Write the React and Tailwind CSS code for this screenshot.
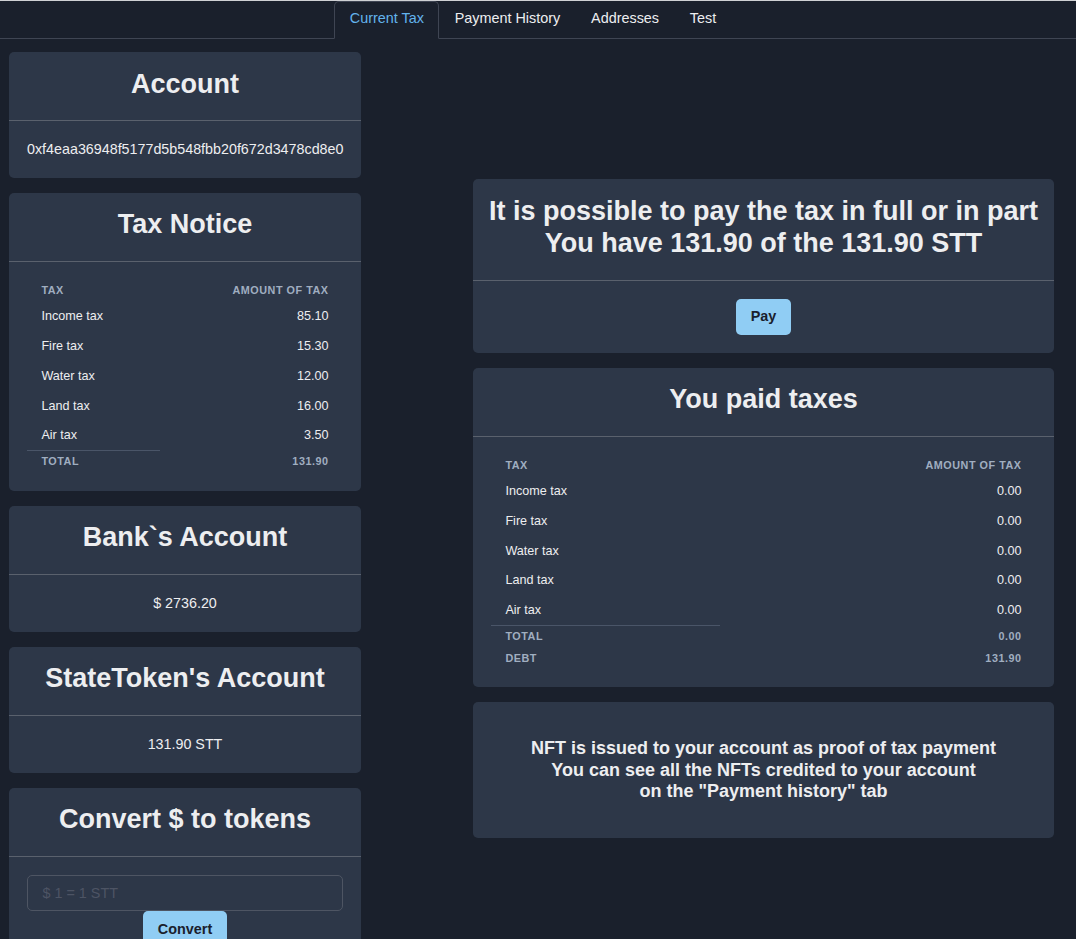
import React from "react";

const taxes = [
  { name: "Income tax", amount: "85.10" },
  { name: "Fire tax", amount: "15.30" },
  { name: "Water tax", amount: "12.00" },
  { name: "Land tax", amount: "16.00" },
  { name: "Air tax", amount: "3.50" },
];

const paid = taxes.map((t) => ({ name: t.name, amount: "0.00" }));

const tabs = ["Current Tax", "Payment History", "Addresses", "Test"];

const Card = ({ title, children, bodyClass = "py-[17.5px] px-[18px]" }) => (
  <div className="bg-[#2d3748] rounded-[5px]">
    <div className="pt-[15.5px] pb-[20.5px] px-[14px] text-center">
      <h2 className="text-[27px] leading-[1.2] font-bold whitespace-nowrap">{title}</h2>
    </div>
    <div className="h-px bg-[#5a616d]" />
    <div className={bodyClass}>{children}</div>
  </div>
);

const Th = ({ children, right, line }) => (
  <th
    className={`px-[14.4px] py-[3.6px] text-[10.8px] leading-[14.4px] tracking-[0.05em] font-bold uppercase text-[#a0aec0] ${
      right ? "text-right" : "text-left"
    } ${line ? "border-t border-[#4a5568]" : ""}`}
  >
    {children}
  </th>
);

// table like on the "tax notice" card, footer rows passed in
const TaxTable = ({ rows, footer }) => (
  <table className="w-full border-collapse">
    <thead>
      <tr className="border-b border-[#2d3748]">
        <Th>Tax</Th>
        <Th right>Amount of tax</Th>
      </tr>
    </thead>
    <tbody>
      {rows.map((r) => (
        <tr key={r.name} className="border-b border-[#2d3748]">
          <td className="px-[14.4px] py-[7.2px] text-[12.6px] leading-[14.4px]">{r.name}</td>
          <td className="px-[14.4px] py-[7.2px] text-[12.6px] leading-[14.4px] text-right">{r.amount}</td>
        </tr>
      ))}
    </tbody>
    <tfoot>
      {footer.map((f, i) => (
        <tr key={f.label}>
          <Th line={i === 0}>{f.label}</Th>
          <Th right>{f.value}</Th>
        </tr>
      ))}
    </tfoot>
  </table>
);

const Button = ({ children }) => (
  <button className="h-[36px] px-[14.4px] rounded-[5px] bg-[#90cdf4] text-[#1a202c] text-[14.4px] font-bold">
    {children}
  </button>
);

export default function App() {
  return (
    <div className="min-h-screen bg-[#1a202c] border-t border-[#cfd1d4] text-[#edeef0] [font-family:'Liberation_Sans',Arial,sans-serif]">
      {/* Tabs */}
      <div className="flex justify-center pr-[10px] border-b border-[#3f4553]">
        {tabs.map((t, i) => (
          <div
            key={t}
            className={`h-[38px] -mb-px pb-[2px] px-[14.4px] flex items-center text-[14.4px] rounded-t-[5px] border ${
              i === 0
                ? "border-[#3f4553] border-b-[#1a202c] text-[#63b3ed]"
                : "border-transparent"
            }`}
          >
            {t}
          </div>
        ))}
      </div>

      <div className="flex items-center gap-[112px] px-[9px] pt-[13px] pb-[20px]">
        {/* Left column */}
        <div className="w-[352px] flex flex-col gap-[15px]">
          <Card title="Account">
            <p className="text-center text-[14.3px] leading-[21.6px]">
              0xf4eaa36948f5177d5b548fbb20f672d3478cd8e0
            </p>
          </Card>

          <Card title="Tax Notice" bodyClass="pt-[17px] pb-[18.5px] px-[18px]">
            <TaxTable rows={taxes} footer={[{ label: "Total", value: "131.90" }]} />
          </Card>

          <Card title="Bank`s Account">
            <p className="text-center text-[14.3px] leading-[21.6px]">$ 2736.20</p>
          </Card>

          <Card title="StateToken's Account">
            <p className="text-center text-[14.3px] leading-[21.6px]">131.90 STT</p>
          </Card>

          <Card title="Convert $ to tokens" bodyClass="pt-[18px] pb-[18px] px-[18px] flex flex-col items-center">
            <input
              placeholder="$ 1 = 1 STT"
              className="w-full h-[36px] px-[14.4px] rounded-[5px] border border-[#4e5563] bg-transparent text-[14.4px] outline-none placeholder:text-[#4d5464]"
            />
            <Button>Convert</Button>
          </Card>
        </div>

        {/* Right column */}
        <div className="w-[581px] flex flex-col gap-[15px]">
          <Card
            title={
              <>
                It is possible to pay the tax in full or in part
                <br />
                You have 131.90 of the 131.90 STT
              </>
            }
            bodyClass="py-[18px] flex justify-center"
          >
            <Button>Pay</Button>
          </Card>

          <Card title="You paid taxes" bodyClass="pt-[17px] pb-[18.5px] px-[18px]">
            <TaxTable
              rows={paid}
              footer={[
                { label: "Total", value: "0.00" },
                { label: "Debt", value: "131.90" },
              ]}
            />
          </Card>

          <div className="bg-[#2d3748] rounded-[5px] py-[35.5px] text-center">
            <h3 className="text-[18px] leading-[1.2] font-bold">
              NFT is issued to your account as proof of tax payment
              <br />
              You can see all the NFTs credited to your account
              <br />
              on the "Payment history" tab
            </h3>
          </div>
        </div>
      </div>
    </div>
  );
}
